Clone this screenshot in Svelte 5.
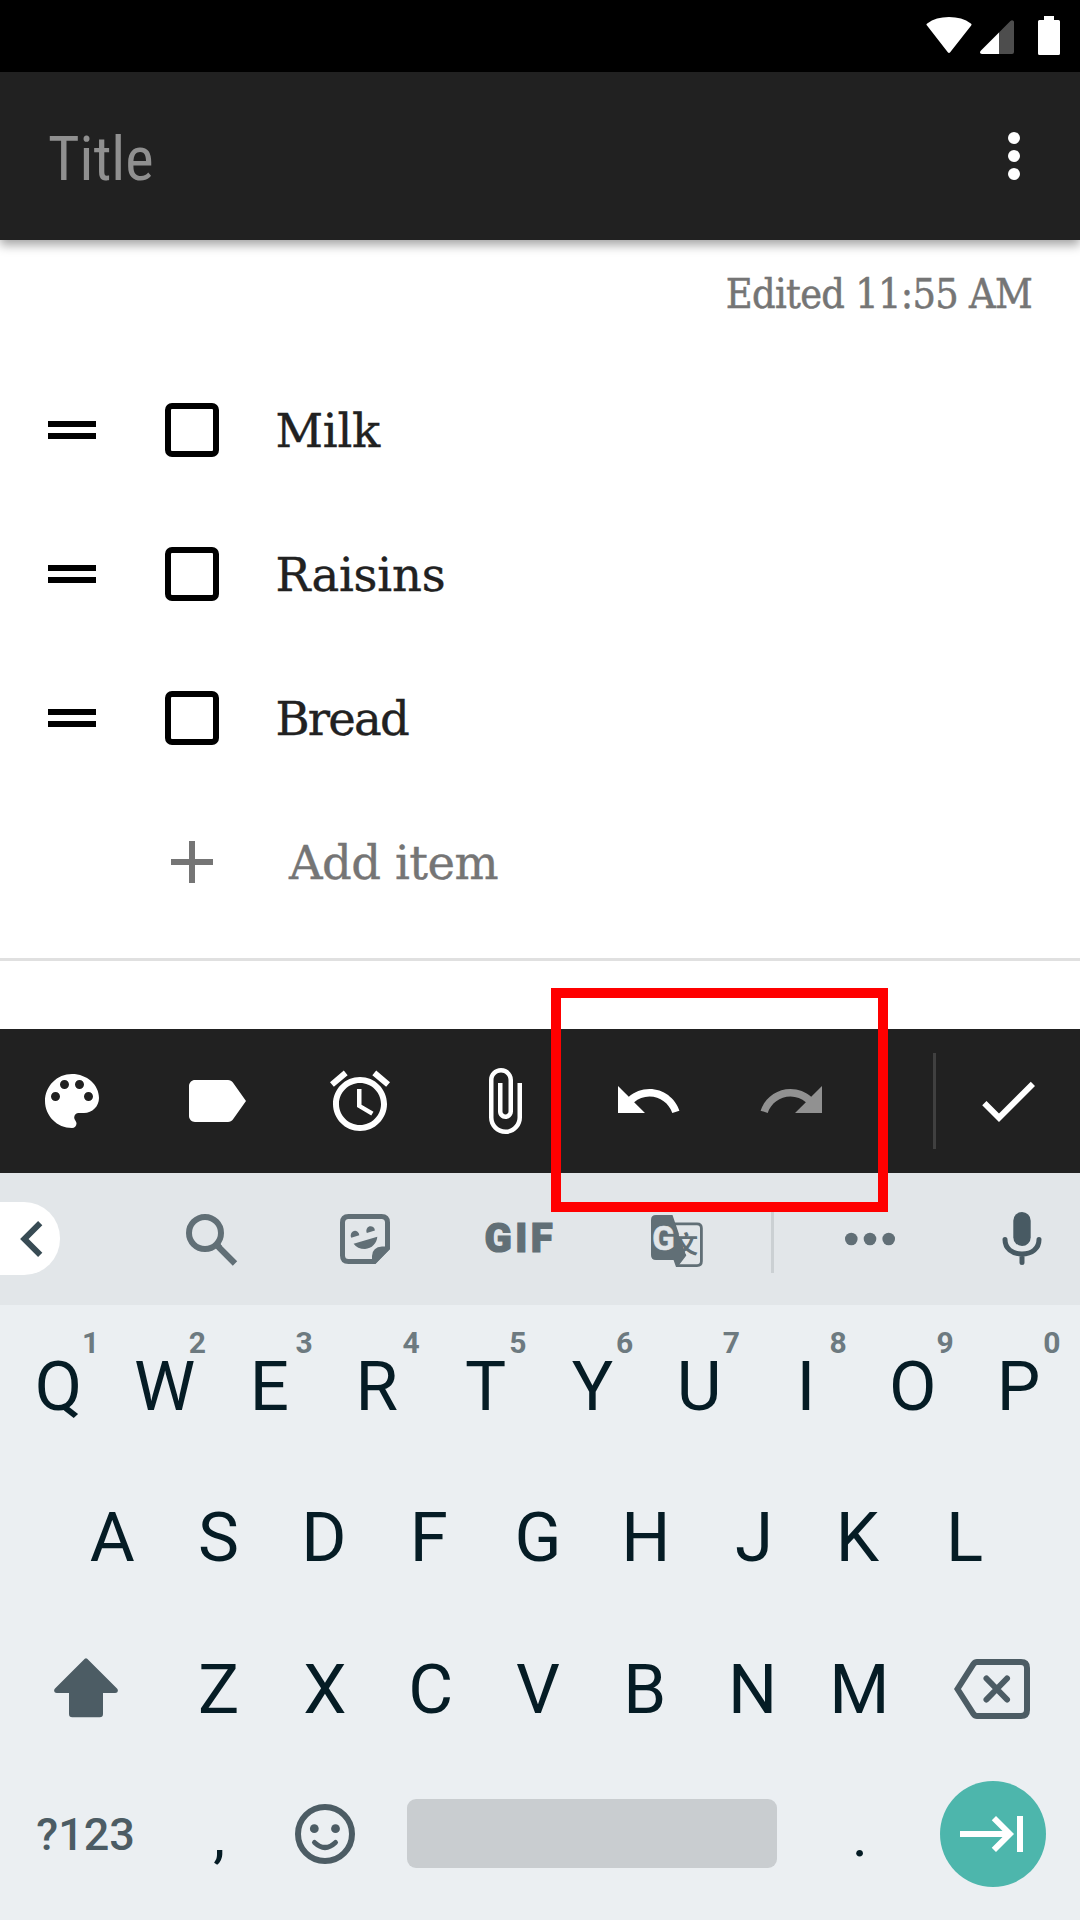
<script lang="ts">
  const items = [
    { label: 'Milk', cls: 'milk' },
    { label: 'Raisins', cls: 'raisins' },
    { label: 'Bread', cls: 'bread' },
  ];
  const nudge: Record<string, number> = { W: -0.5, E: -2.7, R: -2, P: -1, A: 0.5, D: -1.5, F: -3.5, G: -1, K: -2, L: -1.5, J: 1.5, C: -1.5, B: -1, V: -1, X: -0.5 };
  const key = (letter: string) => ({ letter, dx: nudge[letter] ?? 0 });
  const row1 = 'QWERTYUIOP'.split('').map((l, i) => ({ ...key(l), hint: String((i + 1) % 10) }));
  const row2 = 'ASDFGHJKL'.split('').map(key);
  const row3 = 'ZXCVBNM'.split('').map(key);

  const tools = [
    { name: 'Palette', d: 'M12 3c-4.97 0-9 4.03-9 9s4.03 9 9 9c.83 0 1.5-.67 1.5-1.5 0-.39-.15-.74-.39-1.01-.23-.26-.38-.61-.38-.99 0-.83.67-1.5 1.5-1.5H16c2.76 0 5-2.24 5-5 0-4.42-4.03-8-9-8zm-5.5 9c-.83 0-1.5-.67-1.5-1.5S5.67 9 6.5 9 8 9.67 8 10.5 7.33 12 6.5 12zm3-4C8.67 8 8 7.33 8 6.5S8.67 5 9.5 5s1.5.67 1.5 1.5S10.33 8 9.5 8zm5 0c-.83 0-1.5-.67-1.5-1.5S13.67 5 14.5 5s1.5.67 1.5 1.5S15.33 8 14.5 8zm3 4c-.83 0-1.5-.67-1.5-1.5S16.67 9 17.5 9s1.5.67 1.5 1.5-.67 1.5-1.5 1.5z' },
    { name: 'Label', d: 'M17.63 5.84C17.27 5.33 16.67 5 16 5L5 5.01C3.9 5.01 3 5.9 3 7v10c0 1.1.9 1.99 2 1.99L16 19c.67 0 1.27-.33 1.63-.84L22 12l-4.37-6.16z' },
    { name: 'Reminder', d: 'M22 5.72l-4.6-3.86-1.29 1.53 4.6 3.86L22 5.72zM7.88 3.39L6.6 1.86 2 5.71l1.29 1.53 4.59-3.85zM12.5 8H11v6l4.75 2.85.75-1.23-4-2.37V8zM12 4c-4.97 0-9 4.03-9 9s4.02 9 9 9c4.97 0 9-4.03 9-9s-4.03-9-9-9zm0 16c-3.87 0-7-3.13-7-7s3.13-7 7-7 7 3.13 7 7-3.13 7-7 7z' },
    { name: 'Attach', d: 'M16.5 6v11.5c0 2.21-1.79 4-4 4s-4-1.79-4-4V5c0-1.38 1.12-2.5 2.5-2.5s2.5 1.12 2.5 2.5v10.5c0 .55-.45 1-1 1s-1-.45-1-1V6H10v9.5c0 1.38 1.12 2.5 2.5 2.5s2.5-1.12 2.5-2.5V5c0-2.21-1.79-4-4-4S7 2.79 7 5v12.5c0 3.04 2.46 5.5 5.5 5.5s5.5-2.46 5.5-5.5V6h-1.5z' },
    { name: 'Undo', d: 'M12.5 8c-2.65 0-5.05.99-6.9 2.6L2 7v9h9l-3.62-3.62c1.39-1.16 3.16-1.88 5.12-1.88 3.54 0 6.55 2.31 7.6 5.5l2.37-.78C21.08 11.03 17.15 8 12.5 8z' },
    { name: 'Redo', dim: true, d: 'M18.4 10.6C16.55 8.99 14.15 8 11.5 8c-4.65 0-8.58 3.03-9.96 7.22L3.9 16c1.05-3.19 4.05-5.5 7.6-5.5 1.95 0 3.73.72 5.12 1.88L13 16h9V7l-3.6 3.6z' },
  ];
</script>

<div class="screen">
  <div class="status">
    <svg width="46" height="36" viewBox="0 0 46 36" class="wifi"><path fill="#fff" d="M1 8.6Q-.2 7.4 1.2 6.4Q10 0 23 0Q36 0 44.8 6.4Q46.2 7.4 45 8.8L24.2 35.2Q23 36.6 21.8 35.2Z" /></svg>
    <svg width="34" height="34" viewBox="0 0 34 34" class="signal">
      <path fill="#4d4d4d" d="M19 12.5L30.4 1Q31.6 0 32.8.4Q34 .8 34 2V32Q34 34 32 34H19Z" />
      <path fill="#fff" d="M19 12.5V34H2Q0 34 0 32.6Q0 31.4 1 30.5Z" />
    </svg>
    <svg width="22" height="39" viewBox="0 0 22 39" class="battery"><path fill="#fff" d="M6 0H16V4H20.5Q22 4 22 5.5V37.5Q22 39 20.5 39H1.5Q0 39 0 37.5V5.5Q0 4 1.5 4H6Z" /></svg>
  </div>

  <header class="appbar">
    <span class="title">Title</span>
    <svg width="72" height="72" viewBox="0 0 24 24" fill="#fff"><circle cx="12" cy="6" r="2" /><circle cx="12" cy="12" r="2" /><circle cx="12" cy="18" r="2" /></svg>
  </header>

  <main class="note">
    <div class="edited"><span>Edited 11:55 AM</span></div>
    {#each items as item}
      <div class="item">
        <span class="handle"></span>
        <span class="box"></span>
        <span class="text {item.cls}">{item.label}</span>
      </div>
    {/each}
    <div class="item add">
      <svg width="42" height="42" viewBox="0 0 42 42"><path d="M18 0h6v18h18v6H24v18h-6V24H0v-6h18z" fill="#757575" /></svg>
      <span class="text">Add item</span>
    </div>
    <div class="rule"></div>
  </main>

  <div class="toolbar">
    {#each tools as t}
      <div class="tool" class:dim={t.dim}>
        <svg width="72" height="72" viewBox="0 0 24 24" aria-label={t.name}><path fill="currentColor" d={t.d} /></svg>
      </div>
    {/each}
    <div class="sep"></div>
    <div class="tool">
      <svg width="72" height="72" viewBox="0 0 24 24"><path fill="currentColor" d="M9 16.17L4.83 12l-1.42 1.41L9 19 21 7l-1.41-1.41z" /></svg>
    </div>
    <div class="highlight"></div>
  </div>

  <div class="strip">
    <div class="tab">
      <svg width="23" height="36" viewBox="8 6 7.6 12"><path fill="#384b54" d="M15.41 7.41L14 6l-6 6 6 6 1.41-1.41L10.83 12z" /></svg>
    </div>
    <div class="cell search">
      <svg width="52" height="52" viewBox="0 0 52 52" fill="none" stroke="#616f76" stroke-width="6"><circle cx="19" cy="19" r="16" /><path d="M31.5 31.5L33.5 34L49 49.5" stroke-width="6.2" /><path d="M30 30l4 4" /></svg>
    </div>
    <div class="cell sticker">
      <svg width="50" height="50" viewBox="0 0 50 50">
        <path fill="none" stroke="#616f76" stroke-width="5" d="M8.5 2.5H41.5Q47.5 2.5 47.5 8.5V34L34 47.5H8.5Q2.5 47.5 2.5 41.5V8.5Q2.5 2.5 8.5 2.5Z" />
        <path fill="#616f76" d="M32 49.5V42Q32.5 33 42 32.5H50V35L35.5 50Z" />
        <path fill="#616f76" d="M11.3 23.7A4.3 4.6 0 1 1 19.3 21.2ZM26.8 18.9A4.3 4.6 0 1 1 34.9 16.6ZM13.6 29.7L37.3 22.8C37 29 31.8 34.8 25 35C20 35 16 33 13.6 29.7Z" />
      </svg>
    </div>
    <div class="cell gif"><span>GIF</span></div>
    <div class="cell translate">
      <svg width="52" height="52" viewBox="0 0 52 52">
        <path fill="none" stroke="#616f76" stroke-width="2.8" d="M23 8.9H46Q50.4 8.9 50.4 13.3V46.3Q50.4 50.6 46 50.6H26L23 42" />
        <path fill="#616f76" d="M5 0H21.5L35.3 40.5L26.5 52L23.8 45H5Q0 45 0 40V5Q0 0 5 0Z" />
        <path fill="#e2e6e9" d="M27.6 19.5H36V40L34.6 38.5Z" />
        <text class="tg" x="1.2" y="35.2">G</text>
        <text class="tz" x="23" y="38.2">文</text>
      </svg>
    </div>
    <div class="vline"></div>
    <div class="cell more">
      <svg width="52" height="14" viewBox="0 0 52 14" fill="#616f76"><circle cx="7.3" cy="7" r="6.3" /><circle cx="26" cy="7" r="6.3" /><circle cx="44.7" cy="7" r="6.3" /></svg>
    </div>
    <div class="cell mic">
      <svg width="40" height="54" viewBox="0 0 40 54"><rect x="11.3" y="0" width="17.4" height="34" rx="8.7" fill="#485a63" /><path d="M3 27.5C3 36.5 10 42 20 42S37 36.5 37 27.5M20 42V50.5" fill="none" stroke="#485a63" stroke-width="5" stroke-linecap="round" /></svg>
    </div>
  </div>

  <div class="keyboard">
    <div class="keys">
      {#each row1 as k}
        <div class="key"><span style:translate="{k.dx}px">{k.letter}</span><span class="hint">{k.hint}</span></div>
      {/each}
    </div>
    <div class="keys">
      {#each row2 as k}<div class="key"><span style:translate="{k.dx}px">{k.letter}</span></div>{/each}
    </div>
    <div class="keys">
      <div class="key wide shift">
        <svg width="64" height="60" viewBox="0 0 64 60"><path fill="#4c5c64" d="M30.8 .8Q32 -.4 33.2 .8L63 30.5Q64.6 32.4 63.3 34.2Q62.6 35 61 35H49V56Q49 59.3 45.7 59.3H18.3Q15 59.3 15 56V35H3Q1.4 35 .7 34.2Q-.6 32.4 1 30.5Z" /></svg>
      </div>
      {#each row3 as k}<div class="key"><span style:translate="{k.dx}px">{k.letter}</span></div>{/each}
      <div class="key wide back">
        <svg width="76" height="60" viewBox="0 0 76 60" fill="none" stroke="#4c5c64" stroke-width="6"><path d="M23 3H67Q73 3 73 9V51Q73 57 67 57H23Q21 57 19.5 55L3.5 30L19.5 5Q21 3 23 3Z" /><path d="M32.5 19.5L53 40.5M53 19.5L32.5 40.5" stroke-linecap="round" /></svg>
      </div>
    </div>
    <div class="keys bottom">
      <div class="key wide sym">?123</div>
      <div class="key punct">,</div>
      <div class="key">
        <svg width="60" height="60" viewBox="0 0 60 60" fill="none" stroke="#4c5c64"><circle cx="30" cy="30" r="27" stroke-width="6" /><circle cx="19.3" cy="24.7" r="4.4" fill="#4c5c64" stroke="none" /><circle cx="40.5" cy="24.7" r="4.4" fill="#4c5c64" stroke="none" /><path d="M19.5 38.5Q30 48.5 40.5 38.5" stroke-width="5" stroke-linecap="round" /></svg>
      </div>
      <div class="key spacecell"><span class="space"></span></div>
      <div class="key punct">.</div>
      <div class="key wide"><span class="enter"><svg width="72" height="72" viewBox="0 0 24 24"><path fill="#fff" d="M11.59 7.41L15.17 11H1v2h14.17l-3.59 3.59L13 18l6-6-6-6-1.41 1.41zM20 6v12h2V6h-2z" /></svg></span></div>
    </div>
  </div>
</div>

<style>
  :global(body) { background: #fff; overflow: hidden; }
  .screen { width: 1080px; height: 1920px; display: flex; flex-direction: column; font-family: Roboto, sans-serif; background: #fff; overflow: hidden; }
  svg { display: block; flex: none; }
  .status { height: 72px; flex: none; background: #000; display: flex; justify-content: flex-end; align-items: flex-start; padding-right: 20px; box-sizing: border-box; }
  .wifi { margin: 17px 8px 0 0; }
  .signal { margin: 20px 24px 0 0; }
  .battery { margin-top: 16px; }
  .appbar { height: 168px; flex: none; background: #212121; display: flex; align-items: center; justify-content: space-between; padding: 0 30px 0 48px; box-sizing: border-box; box-shadow: 0 5px 10px rgba(0, 0, 0, .36); z-index: 1; }
  .title { font-family: 'Roboto Condensed', Roboto, sans-serif; font-stretch: 75%; font-size: 60.5px; line-height: 72px; color: #909090; margin-top: 7px; }
  .note { height: 789px; flex: none; font-family: 'Roboto Slab', 'DejaVu Serif', serif; }
  .edited { height: 118px; padding: 27px 48px 0 0; box-sizing: border-box; text-align: right; font-family: 'Roboto Slab', 'DejaVu Serif Condensed', 'DejaVu Serif', serif; font-size: 41px; line-height: 54px; letter-spacing: -.7px; color: #757575; white-space: nowrap; -webkit-text-stroke: .5px #757575; }
  .item { height: 144px; display: flex; align-items: center; padding-left: 48px; }
  .handle { width: 48px; height: 6px; border-top: 6px solid #000; border-bottom: 6px solid #000; }
  .box { width: 42px; height: 42px; border: 6px solid #000; border-radius: 7px; margin-left: 69px; }
  .text { font-size: 46.5px; line-height: 60px; margin: 2px 0 0 56.5px; color: #212121; white-space: nowrap; -webkit-text-stroke: .4px currentColor; }
  .milk { letter-spacing: -.3px; }
  .raisins { letter-spacing: -.2px; }
  .bread { letter-spacing: -1.8px; }
  .add { padding-left: 171px; }
  .add .text { color: #757575; margin-left: 76px; letter-spacing: -.5px; }
  .rule { height: 3px; background: #e0e0e0; margin-top: 24px; }
  .toolbar { height: 144px; flex: none; background: #212121; display: flex; align-items: center; position: relative; z-index: 2; }
  .tool { width: 144px; display: flex; justify-content: center; color: #fff; }
  .dim { color: #919191; }
  .sep { width: 3px; height: 96px; background: #404040; margin-left: 69px; }
  .highlight { position: absolute; left: 551px; top: -41px; width: 317px; height: 204px; border: 10px solid #f00; }
  .strip { height: 132px; flex: none; background: #e2e6e9; display: flex; align-items: center; }
  .tab { width: 60px; height: 73px; background: #fff; border-radius: 0 36px 36px 0; display: flex; align-items: center; padding-left: 20px; box-sizing: border-box; margin-right: 74px; margin-bottom: 1px; }
  .cell { width: 154.5px; display: flex; justify-content: center; box-sizing: border-box; }
  .search { padding-left: 2px; padding-top: 2px; }
  .sticker { padding-right: 2px; }
  .translate { padding-left: 4px; padding-top: 3px; }
  .gif { font-size: 40px; line-height: 40px; font-weight: 900; color: #616f76; letter-spacing: 3.4px; -webkit-text-stroke: 1.2px #616f76; }
  .tg { font: 700 33px Roboto, sans-serif; fill: #e2e6e9; stroke: #e2e6e9; stroke-width: .6px; }
  .tz { font: 700 24px 'Noto Sans CJK SC', sans-serif; fill: #616f76; }
  .vline { width: 3px; height: 68px; background: #cbd0d3; margin-left: 19px; }
  .more { width: 192px; }
  .mic { width: 111px; }
  .keyboard { flex: 1; background: #ebeff2; padding: 6px 6px 0 4px; }
  .keys { height: 151.6px; display: flex; justify-content: center; }
  .key { width: 106.8px; height: 100%; display: flex; align-items: center; justify-content: center; font-size: 69px; line-height: 80px; color: #051c25; position: relative; }
  .hint { position: absolute; top: 17px; left: 77px; font-size: 30px; line-height: 30px; font-weight: 700; color: #6d7a80; }
  .wide { width: 160.2px; }
  .shift { padding: 0 0 4px 2px; box-sizing: border-box; }
  .back { padding: 0 1px 2px 0; box-sizing: border-box; }
  .bottom { height: 136px; }
  .sym { font-size: 45px; font-weight: 500; color: #4c5c64; box-sizing: border-box; padding: 2px 0 0 1px; }
  .punct { font-size: 60px; box-sizing: border-box; padding: 4px 0 0 1px; }
  .spacecell { width: 427.2px; }
  .space { width: 370px; height: 69px; border-radius: 9px; background: #c9cdd0; }
  .enter { width: 106px; height: 106px; border-radius: 50%; background: #4db6ac; display: flex; align-items: center; justify-content: center; }
</style>
